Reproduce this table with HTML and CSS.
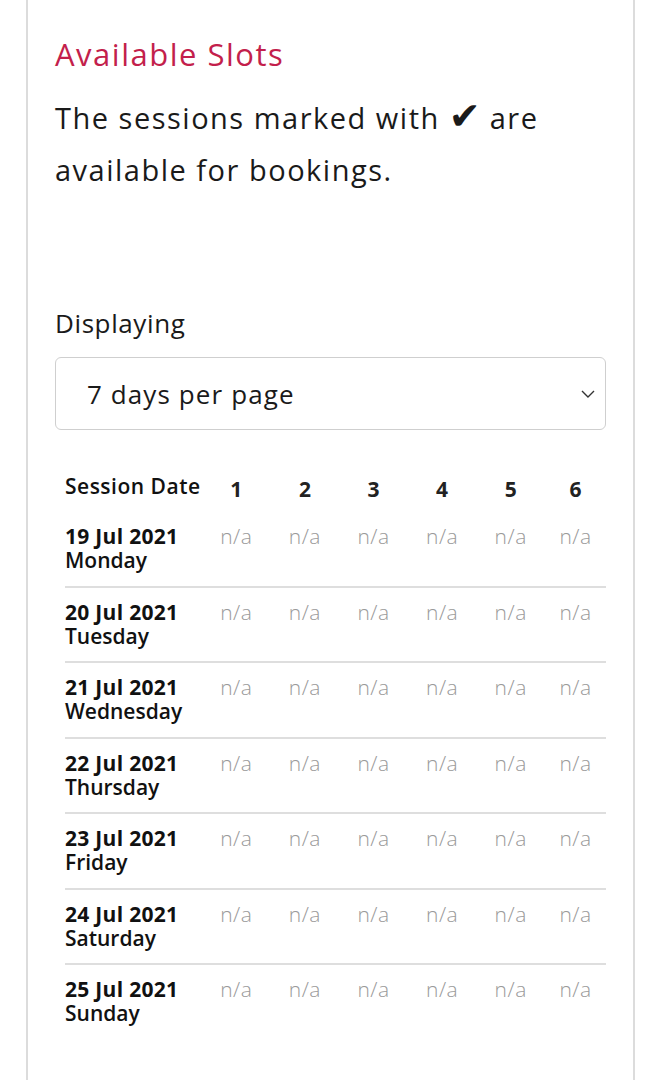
FILE: index.html
```html
<!DOCTYPE html>
<html>
<head>
<meta charset="utf-8">
<link rel="stylesheet" href="styles.css">
</head>
<body>
<div class="card">
  <h2 class="title">Available Slots</h2>
  <p class="intro">The sessions marked with <span class="tick">✔</span> are available for bookings.</p>
  <label class="label">Displaying</label>
  <div class="select">
    <span>7 days per page</span>
    <svg class="chev" width="14" height="8" viewBox="0 0 14 8"><path d="M1 1l6 6 6-6" fill="none" stroke="#333" stroke-width="1.4"/></svg>
  </div>
  <div class="table">
    <div class="row head">
      <div class="date">Session Date</div>
      <div class="c">1</div><div class="c">2</div><div class="c">3</div><div class="c">4</div><div class="c">5</div><div class="c">6</div>
    </div>
    <div class="row">
      <div class="date"><b>19 Jul 2021</b><span>Monday</span></div>
      <div class="c na">n/a</div><div class="c na">n/a</div><div class="c na">n/a</div><div class="c na">n/a</div><div class="c na">n/a</div><div class="c na">n/a</div>
    </div>
    <div class="row">
      <div class="date"><b>20 Jul 2021</b><span>Tuesday</span></div>
      <div class="c na">n/a</div><div class="c na">n/a</div><div class="c na">n/a</div><div class="c na">n/a</div><div class="c na">n/a</div><div class="c na">n/a</div>
    </div>
    <div class="row">
      <div class="date"><b>21 Jul 2021</b><span>Wednesday</span></div>
      <div class="c na">n/a</div><div class="c na">n/a</div><div class="c na">n/a</div><div class="c na">n/a</div><div class="c na">n/a</div><div class="c na">n/a</div>
    </div>
    <div class="row">
      <div class="date"><b>22 Jul 2021</b><span>Thursday</span></div>
      <div class="c na">n/a</div><div class="c na">n/a</div><div class="c na">n/a</div><div class="c na">n/a</div><div class="c na">n/a</div><div class="c na">n/a</div>
    </div>
    <div class="row">
      <div class="date"><b>23 Jul 2021</b><span>Friday</span></div>
      <div class="c na">n/a</div><div class="c na">n/a</div><div class="c na">n/a</div><div class="c na">n/a</div><div class="c na">n/a</div><div class="c na">n/a</div>
    </div>
    <div class="row">
      <div class="date"><b>24 Jul 2021</b><span>Saturday</span></div>
      <div class="c na">n/a</div><div class="c na">n/a</div><div class="c na">n/a</div><div class="c na">n/a</div><div class="c na">n/a</div><div class="c na">n/a</div>
    </div>
    <div class="row last">
      <div class="date"><b>25 Jul 2021</b><span>Sunday</span></div>
      <div class="c na">n/a</div><div class="c na">n/a</div><div class="c na">n/a</div><div class="c na">n/a</div><div class="c na">n/a</div><div class="c na">n/a</div>
    </div>
  </div>
</div>
</body>
</html>
```

FILE: styles.css
```css
html, body {
  margin: 0;
  padding: 0;
  background: #fff;
}
body {
  font-family: "Open Sans", Lato, sans-serif;
  color: #1a1a1a;
}
.card {
  margin-left: 26px;
  width: 609px;
  min-height: 1080px;
  box-sizing: border-box;
  border-left: 2px solid #dcdcdc;
  border-right: 2px solid #dcdcdc;
  padding: 34px 27px 0 27px;
}
.title {
  margin: 0;
  font-weight: 400;
  font-size: 31px;
  line-height: 40px;
  color: #c31f4c;
  letter-spacing: 1.5px;
}
.intro {
  margin: 18px 0 0;
  font-size: 29px;
  line-height: 52px;
  color: #1a1a1a;
  width: 530px;
  letter-spacing: 1.5px;
}
.tick {
  font-family: "DejaVu Sans", sans-serif;
  font-size: 38px;
  line-height: 1;
  letter-spacing: 0;
}
.label {
  display: block;
  margin-top: 110px;
  font-size: 26px;
  line-height: 34px;
  letter-spacing: 0.6px;
}
.select {
  margin-top: 17px;
  height: 73px;
  box-sizing: border-box;
  border: 1.5px solid #cfcfcf;
  border-radius: 6px;
  display: flex;
  align-items: center;
  justify-content: space-between;
  padding: 0 10px 0 31px;
  font-size: 26px;
  letter-spacing: 1.1px;
  width: 551px;
}
.table {
  margin-top: 44px;
  padding-left: 10px;
  width: 541px;
}
.row {
  display: grid;
  grid-template-columns: 137px repeat(5, 68.6px) 1fr;
  border-bottom: 2px solid #dedede;
  padding: 12px 0 10px;
  height: 75.5px;
  box-sizing: border-box;
}
.row.head {
  border-bottom: none;
  height: auto;
  padding: 0 0 8px;
  font-weight: 700;
  font-size: 21px;
  line-height: 30px;
  color: #222;
}
.row.head .date {
  font-weight: 600;
  font-size: 21px;
  letter-spacing: 0.5px;
  white-space: nowrap;
}
.row.last {
  border-bottom: none;
}
.date {
  display: flex;
  flex-direction: column;
  font-size: 21px;
  line-height: 24px;
  color: #111;
}
.date b {
  font-weight: 700;
  letter-spacing: 0.3px;
  white-space: nowrap;
}
.date span {
  font-weight: 600;
  letter-spacing: 0;
}
.c {
  text-align: center;
}
.na {
  font-size: 21px;
  line-height: 24px;
  color: #9a9a9a;
  font-weight: 300;
  letter-spacing: 0.5px;
}
```
